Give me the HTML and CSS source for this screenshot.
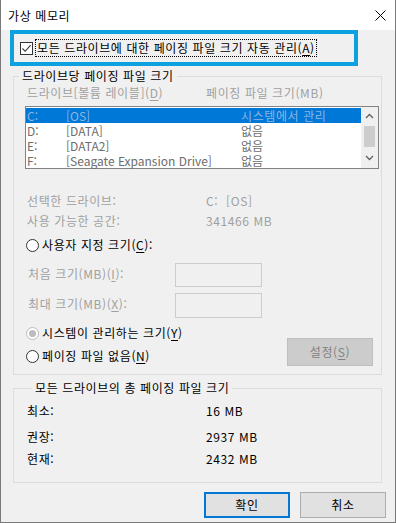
FILE: index.html
```html
<!DOCTYPE html>
<html lang="ko">
<head>
    <meta charset="UTF-8">
    <meta name="viewport" content="width=device-width, initial-scale=1.0">
    <title>가상 메모리</title>
    <link rel="stylesheet" href="styles.css">
</head>
<body>
    <div class="window">
        <div class="titlebar">
            <span class="title">가상 메모리</span>
            <svg class="close" width="11" height="11" viewBox="0 0 11 11">
                <path d="M0.5 0.5 L10.5 10.5 M10.5 0.5 L0.5 10.5" stroke="#000" stroke-width="1" fill="none"/>
            </svg>
        </div>

        <div class="highlight">
            <div class="check-row">
                <span class="checkbox">
                    <svg width="11" height="11" viewBox="0 0 11 11">
                        <path d="M1.5 5.5 L4.2 8.3 L9.6 2.2" stroke="#333" stroke-width="1.1" fill="none"/>
                    </svg>
                </span>
                <span class="focus">모든 드라이브에 대한 페이징 파일 크기 자동 관리(<u>A</u>)</span>
            </div>
        </div>

        <fieldset class="group group-drive">
            <legend>드라이브당 페이징 파일 크기</legend>
            <div class="cols disabled">
                <span>드라이브[볼륨 레이블](<u>D</u>)</span>
                <span>페이징 파일 크기(MB)</span>
            </div>

            <div class="listbox">
                <div class="rows">
                    <div class="row selected"><span>C:</span><span>[OS]</span><span class="ko">시스템에서 관리</span></div>
                    <div class="row"><span>D:</span><span>[DATA]</span><span>없음</span></div>
                    <div class="row"><span>E:</span><span>[DATA2]</span><span>없음</span></div>
                    <div class="row"><span>F:</span><span>[Seagate Expansion Drive]</span><span>없음</span></div>
                </div>
                <div class="scrollbar">
                    <svg width="9" height="6" viewBox="0 0 9 6"><path d="M1 5 L4.5 1.5 L8 5" stroke="#606060" stroke-width="1.3" fill="none"/></svg>
                    <div class="thumb"></div>
                    <svg width="9" height="6" viewBox="0 0 9 6"><path d="M1 1 L4.5 4.5 L8 1" stroke="#606060" stroke-width="1.3" fill="none"/></svg>
                </div>
            </div>

            <div class="info disabled">
                <span>선택한 드라이브:</span><span>C:&nbsp;&nbsp;[OS]</span>
                <span>사용 가능한 공간:</span><span>341466 MB</span>
            </div>

            <div class="radio-row first">
                <span class="radio"></span>
                <span>사용자 지정 크기(<u>C</u>):</span>
            </div>

            <div class="size-row">
                <span class="disabled">처음 크기(MB)(<u>I</u>):</span>
                <span class="field"></span>
            </div>
            <div class="size-row second">
                <span class="disabled">최대 크기(MB)(<u>X</u>):</span>
                <span class="field"></span>
            </div>

            <div class="bottom-row">
                <div class="radios">
                    <div class="radio-row">
                        <span class="radio checked"></span>
                        <span>시스템이 관리하는 크기(<u>Y</u>)</span>
                    </div>
                    <div class="radio-row">
                        <span class="radio"></span>
                        <span>페이징 파일 없음(<u>N</u>)</span>
                    </div>
                </div>
                <button class="btn btn-disabled">설정(<u>S</u>)</button>
            </div>
        </fieldset>

        <fieldset class="group group-total">
            <legend>모든 드라이브의 총 페이징 파일 크기</legend>
            <div class="total r1"><span>최소:</span><span>16 MB</span></div>
            <div class="total r2"><span>권장:</span><span>2937 MB</span></div>
            <div class="total r3"><span>현재:</span><span>2432 MB</span></div>
        </fieldset>

        <div class="actions">
            <button class="btn btn-default">확인</button>
            <button class="btn">취소</button>
        </div>
    </div>
</body>
</html>
```

FILE: styles.css
```css
* {
    box-sizing: border-box;
}

body {
    margin: 0;
    font-family: "Noto Sans CJK KR", "Noto Sans", sans-serif;
    font-size: 12px;
    line-height: 16px;
    letter-spacing: 0.6px;
    color: #000;
}

u {
    text-decoration: underline;
    text-underline-offset: 2px;
}

.window {
    width: 396px;
    height: 523px;
    background-color: #f0f0f0;
    border: 1px solid #7a7a7a;
    border-top: none;
    overflow: hidden;
}

.titlebar {
    height: 30px;
    background-color: #fff;
    display: flex;
    align-items: center;
    padding-left: 8px;
    margin: 0 -1px;
}

.title {
    flex: 1;
    padding-top: 1px;
}

.close {
    margin-right: 10px;
    margin-top: 1px;
}

.highlight {
    width: 348px;
    height: 36px;
    margin-left: 9px;
    border: 4px solid #0ea1e0;
    padding-left: 6px;
    display: flex;
    align-items: center;
}

.check-row {
    display: flex;
    align-items: center;
}

.checkbox {
    width: 13px;
    height: 13px;
    border: 1px solid #333;
    background-color: #fff;
    display: flex;
    align-items: center;
    justify-content: center;
}

.focus {
    margin-left: 2px;
    padding: 0 1px;
    border: 1px dotted #000;
}

.group {
    margin: 0;
    padding: 0;
    border: 1px solid #dcdcdc;
    min-width: 0;
}

.group legend {
    padding: 0 3px;
    margin-left: 5px;
    line-height: 16px;
}

.group-drive {
    width: 369px;
    margin: 2px 0 0 12px;
    padding-bottom: 8px;
}

.disabled {
    color: #a0a0a0;
}

.cols {
    display: grid;
    grid-template-columns: 179px 1fr;
    padding-left: 13px;
    margin-top: 1px;
}

.listbox {
    width: 354px;
    height: 63px;
    margin: 5px 0 0 11px;
    border: 1px solid #828282;
    background-color: #fff;
    display: flex;
    padding-top: 1px;
}

.rows {
    flex: 1;
}

.row {
    display: grid;
    grid-template-columns: 39px 175px 1fr;
    height: 15px;
    line-height: 15px;
    padding-left: 1px;
    letter-spacing: 0;
    color: #6d6d6d;
}

.row .ko {
    letter-spacing: 0.6px;
}

.row.selected {
    background-color: #0078d7;
    color: #8fb4e0;
}

.scrollbar {
    width: 17px;
    margin-top: -1px;
    background-color: #f0f0f0;
    display: flex;
    flex-direction: column;
    align-items: center;
    padding-top: 6px;
}

.thumb {
    width: 11px;
    height: 21px;
    background-color: #cdcdcd;
    margin: 7px 0 8px;
}

.info {
    display: grid;
    grid-template-columns: 179px 1fr;
    row-gap: 4px;
    padding-left: 13px;
    margin-top: 24px;
}

.radio-row {
    display: flex;
    align-items: center;
    height: 16px;
}

.radio-row.first {
    margin-top: 8px;
    padding-left: 12px;
}

.radio {
    width: 13px;
    height: 13px;
    border: 1px solid #333;
    border-radius: 50%;
    background-color: #fff;
    margin-right: 3px;
    display: flex;
    align-items: center;
    justify-content: center;
}

.radio.checked {
    border-color: #bcbcbc;
    background-color: #fff;
}

.radio.checked::after {
    content: "";
    width: 7px;
    height: 7px;
    border-radius: 50%;
    background-color: #bcbcbc;
}

.size-row {
    display: grid;
    grid-template-columns: 147px 87px;
    align-items: center;
    padding-left: 14px;
    margin-top: 10px;
    height: 24px;
}

.size-row.second {
    margin-top: 6px;
    height: 25px;
}

.size-row > span:first-child {
    margin-bottom: 3px;
}

.field {
    height: 100%;
    border: 1px solid #cccccc;
    background-color: #f0f0f0;
}

.bottom-row {
    display: flex;
    margin-top: 7px;
}

.radios {
    display: flex;
    flex-direction: column;
    gap: 7px;
    padding-left: 12px;
}

.btn {
    font: inherit;
    letter-spacing: 0.6px;
    width: 86px;
    height: 26px;
    padding: 0;
    background-color: #e1e1e1;
    border: 1px solid #adadad;
    color: #000;
}

.btn-disabled {
    height: 28px;
    margin: 13px 8px 0 auto;
    background-color: #cccccc;
    border-color: #bfbfbf;
    color: #838383;
}

.btn-default {
    border: 2px solid #0078d7;
}

.group-total {
    width: 369px;
    margin: 5px 0 0 12px;
    padding: 0 0 15px 13px;
}

.total {
    display: grid;
    grid-template-columns: 179px 1fr;
}

.total.r1 {
    margin-top: 7px;
}

.total.r2 {
    margin-top: 10px;
}

.total.r3 {
    margin-top: 6px;
}

.actions {
    display: flex;
    justify-content: flex-end;
    gap: 10px;
    margin: 9px 9px 0 0;
}
```
